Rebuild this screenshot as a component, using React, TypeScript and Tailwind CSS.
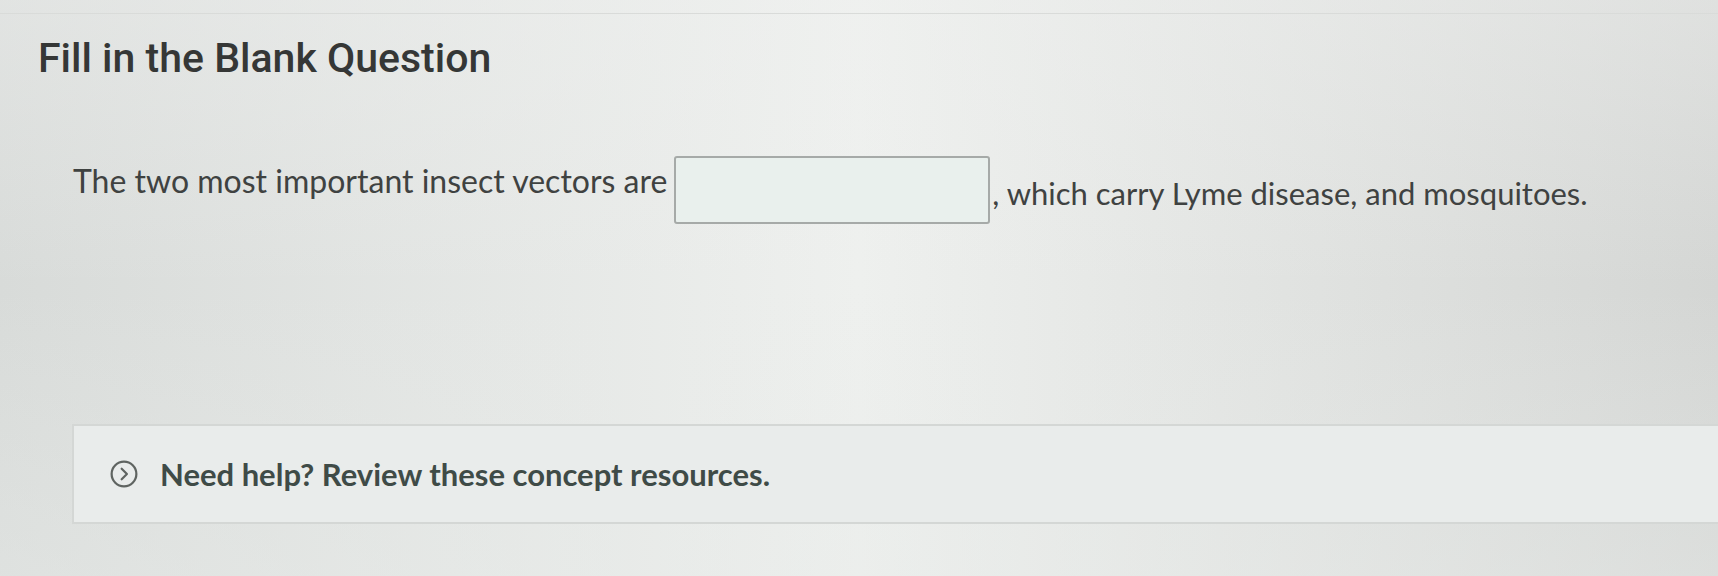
import React from "react";

export default function App() {
  return (
    <div className="relative w-[1718px] h-[576px] overflow-hidden bg-gradient-to-r from-[#d8dbd9] via-[#eef0ee] to-[#d4d6d4]">
      <div className="h-full bg-gradient-to-b from-[#f0f1f0]/40 via-transparent to-[#e8ebe9]/40 flex flex-col">
        <div className="h-[14px] border-b border-[#d9dbd9]" />
        <h1
          className="pl-[38px] pt-[18px] text-[41px] font-medium text-[#353736] leading-[52px]"
          style={{ fontFamily: "Roboto, 'Liberation Sans', sans-serif" }}
        >
          Fill in the Blank Question
        </h1>
        <div
          className="mt-[72px] pl-[73px] flex items-center text-[32px] text-[#3f4241]"
          style={{ fontFamily: "Lato, 'Liberation Sans', sans-serif" }}
        >
          <span className="mb-[18px]">The two most important insect vectors are</span>
          <span className="ml-[7px] w-[316px] h-[68px] rounded-[3px] border-2 border-[#a6aaa8] bg-[#e9f0ed]" />
          <span className="ml-[2px] mt-[6px] text-[31px]">, which carry Lyme disease, and mosquitoes.</span>
        </div>
        <div className="mt-[200px] ml-[72px] h-[100px] border-y-2 border-l-2 border-[#d4d7d5] bg-[#e9eceb] flex items-center pl-[36px] gap-[22px]">
          <svg width="28" height="28" viewBox="0 0 24 24" fill="none" stroke="#5f6461" strokeWidth="1.9">
            <circle cx="12" cy="12" r="10.6" />
            <path d="M10 7.5l4.5 4.5-4.5 4.5" strokeLinecap="round" strokeLinejoin="round" />
          </svg>
          <span
            className="text-[31px] font-bold text-[#3f4b47]"
            style={{ fontFamily: "Lato, 'Liberation Sans', sans-serif" }}
          >
            Need help? Review these concept resources.
          </span>
        </div>
      </div>
    </div>
  );
}
